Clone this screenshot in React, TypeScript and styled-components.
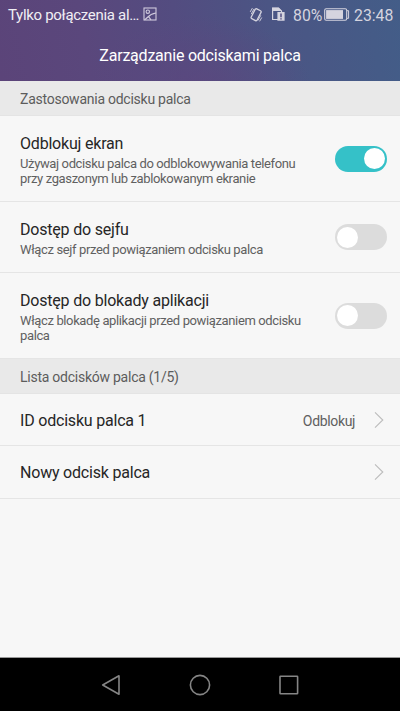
import React from "react";
import styled, { createGlobalStyle } from "styled-components";

const GlobalStyle = createGlobalStyle`
  * { box-sizing: border-box; }
  body { margin: 0; background: #f7f7f7; }
`;

const Screen = styled.div`
  display: flex;
  flex-direction: column;
  width: 400px;
  height: 711px;
  overflow: hidden;
  background: #f7f7f7;
  font-family: Roboto, "Noto Sans", sans-serif;
  white-space: nowrap;
`;

const Header = styled.header`
  flex: none;
  height: 81px;
  color: #fff;
  background: radial-gradient(ellipse 110px 70px at 200px 85px, rgba(94, 70, 126, 0.65), transparent),
    linear-gradient(80deg, #5b4479 0%, #5a477c 22%, #534c80 45%, #4b5584 68%, #435d88 100%);
`;

const StatusBar = styled.div`
  display: flex;
  align-items: center;
  height: 29px;
  padding: 0 7px 0 8px;
  color: #d5d4df;
`;

const Notice = styled.span`
  width: 132px;
  margin-right: 3px;
  padding-top: 1px;
  font-size: 15px;
  letter-spacing: -0.3px;
  color: #f0eef4;
`;

const StatusIcons = styled.div`
  display: flex;
  align-items: center;
  gap: 8px;
  margin-left: auto;
`;

const StatusText = styled.span<{ $width: number }>`
  width: ${(p) => p.$width}px;
  padding-top: 1px;
  font-size: 15.8px;
`;

const Power = styled.div`
  display: flex;
  align-items: center;
  gap: 2px;
  margin-right: -4px;
`;

const Title = styled.h1`
  margin: 0;
  padding-top: 14px;
  font-size: 16px;
  letter-spacing: -0.22px;
  font-weight: 400;
  line-height: 25px;
  text-align: center;
`;

const SectionLabel = styled.h2`
  flex: none;
  display: flex;
  align-items: center;
  height: 35px;
  margin: 0;
  padding: 2px 20px 0;
  border-bottom: 1px solid #e4e4e4;
  background: #e9e9e9;
  color: #5c5c5c;
  font-size: 14px;
  letter-spacing: -0.25px;
  font-weight: 400;
`;

const SettingRow = styled.div<{ $height: number }>`
  flex: none;
  display: flex;
  align-items: center;
  justify-content: space-between;
  height: ${(p) => p.$height}px;
  padding: 0 13px 0 20px;
  border-bottom: 1px solid #e5e5e5;
`;

const SettingText = styled.div`
  padding-top: 2px;
`;

const Label = styled.div`
  color: #262626;
  font-size: 16px;
  letter-spacing: -0.2px;
  line-height: 22px;
`;

const LinkLabel = styled(Label)`
  padding-top: 2px;
`;

const Description = styled.div`
  padding-top: 2px;
  color: #606060;
  font-size: 13px;
  letter-spacing: -0.37px;
  line-height: 14.5px;
`;

const Toggle = styled.button<{ $on: boolean }>`
  display: flex;
  align-items: center;
  justify-content: ${(p) => (p.$on ? "flex-end" : "flex-start")};
  flex: none;
  width: 52px;
  height: 26px;
  padding: 0 2px;
  border: 0;
  border-radius: 13px;
  background: ${(p) => (p.$on ? "#35c1c8" : "#dcdcdc")};
`;

const Knob = styled.span`
  width: 21px;
  height: 21px;
  border-radius: 50%;
  background: #fff;
`;

const LinkEnd = styled.div`
  display: flex;
  align-items: center;
  gap: 18px;
  color: #606060;
  font-size: 14px;
  letter-spacing: -0.35px;
`;

const LinkValue = styled.span`
  padding-top: 2px;
`;

const NavBar = styled.nav`
  display: flex;
  align-items: center;
  justify-content: space-between;
  flex: none;
  height: 54px;
  margin-top: auto;
  padding: 0 100px;
  border-top: 1px solid #999;
  background: #000;
`;

const PictureIcon = () => (
  <svg width="14" height="16" viewBox="0 0 14 16" fill="none" stroke="#d0cadd" strokeWidth="1.1">
    <rect x="1" y="1" width="12" height="12" />
    <circle cx="4.8" cy="4.7" r="1.7" />
    <path d="M1.4 12.6C4 12.2 5 7.2 13 6M5.2 9.2 8 12.8" />
  </svg>
);

const VibrateIcon = () => (
  <svg width="14" height="16" viewBox="0 0 14 16" fill="none" stroke="#d5d4df">
    <rect x="3.7" y="2.2" width="6.6" height="11" rx="1.2" transform="rotate(27 7 8)" strokeWidth="1.3" />
    <path d="M1.2 4.9 3.4 1.1M2.2 7.1 5 1.9M12.8 10.5l-2.2 3.8M11.8 8.3 9 13.5" strokeWidth="0.9" />
  </svg>
);

const SimIcon = () => (
  <svg width="14" height="16" viewBox="0 0 14 16">
    <path d="M1.6 1h5.9l3 3v8.5H1.6Z" fill="none" stroke="#d5d4df" strokeWidth="1.2" />
    <path d="M1.2.8h6.5l3 3.2H1.2ZM6.4 5h7.2v8.8H6.4Z" fill="#d5d4df" />
    <path d="M10 6.4v3.8M10 11.2v1.4" stroke="#534f82" strokeWidth="1.5" />
  </svg>
);

const BatteryIcon = () => (
  <svg width="26" height="13" viewBox="0 0 26 13">
    <rect x="0.7" y="0.7" width="22" height="11.6" rx="1.5" fill="none" stroke="#d5d4df" strokeWidth="1.1" />
    <rect x="2.1" y="2.1" width="16.9" height="8.8" fill="#d5d4df" />
    <path d="M23 2.7h1.6v7.6H23" fill="none" stroke="#d5d4df" />
  </svg>
);

const Chevron = () => (
  <svg width="14" height="18" viewBox="0 0 14 18" fill="none" stroke="#bcbcbc" strokeWidth="1.1">
    <path d="m2 1.3 7.8 7.7L2 16.7" />
  </svg>
);

const settings = [
  {
    label: "Odblokuj ekran",
    lines: ["Używaj odcisku palca do odblokowywania telefonu", "przy zgaszonym lub zablokowanym ekranie"],
    on: true,
    height: 86,
  },
  { label: "Dostęp do sejfu", lines: ["Włącz sejf przed powiązaniem odcisku palca"], on: false, height: 71 },
  {
    label: "Dostęp do blokady aplikacji",
    lines: ["Włącz blokadę aplikacji przed powiązaniem odcisku", "palca"],
    on: false,
    height: 86,
  },
];

export default function App() {
  return (
    <Screen>
      <GlobalStyle />
      <Header>
        <StatusBar>
          <Notice>Tylko połączenia al…</Notice>
          <PictureIcon />
          <StatusIcons>
            <VibrateIcon />
            <SimIcon />
            <Power>
              <StatusText $width={29}>80%</StatusText>
              <BatteryIcon />
            </Power>
            <StatusText $width={39}>23:48</StatusText>
          </StatusIcons>
        </StatusBar>
        <Title>Zarządzanie odciskami palca</Title>
      </Header>
      <SectionLabel>Zastosowania odcisku palca</SectionLabel>
      {settings.map((s) => (
        <SettingRow key={s.label} $height={s.height}>
          <SettingText>
            <Label>{s.label}</Label>
            <Description>
              {s.lines.map((line) => (
                <div key={line}>{line}</div>
              ))}
            </Description>
          </SettingText>
          <Toggle $on={s.on} role="switch" aria-checked={s.on} aria-label={s.label}>
            <Knob />
          </Toggle>
        </SettingRow>
      ))}
      <SectionLabel>Lista odcisków palca (1/5)</SectionLabel>
      <SettingRow $height={52}>
        <LinkLabel>ID odcisku palca 1</LinkLabel>
        <LinkEnd>
          <LinkValue>Odblokuj</LinkValue>
          <Chevron />
        </LinkEnd>
      </SettingRow>
      <SettingRow $height={53}>
        <LinkLabel>Nowy odcisk palca</LinkLabel>
        <Chevron />
      </SettingRow>
      <NavBar>
        <svg width="22" height="22" viewBox="0 0 22 22" fill="none" stroke="#858585" strokeWidth="1.6" strokeLinejoin="round">
          <path d="M2.7 11 19 1.8v18.4Z" />
        </svg>
        <svg width="22" height="22" viewBox="0 0 22 22" fill="none" stroke="#858585" strokeWidth="1.6">
          <circle cx="11" cy="11" r="9.6" />
        </svg>
        <svg width="22" height="22" viewBox="0 0 22 22" fill="none" stroke="#858585" strokeWidth="1.6">
          <rect x="2" y="2.2" width="17.6" height="17.6" rx="0.6" />
        </svg>
      </NavBar>
    </Screen>
  );
}
